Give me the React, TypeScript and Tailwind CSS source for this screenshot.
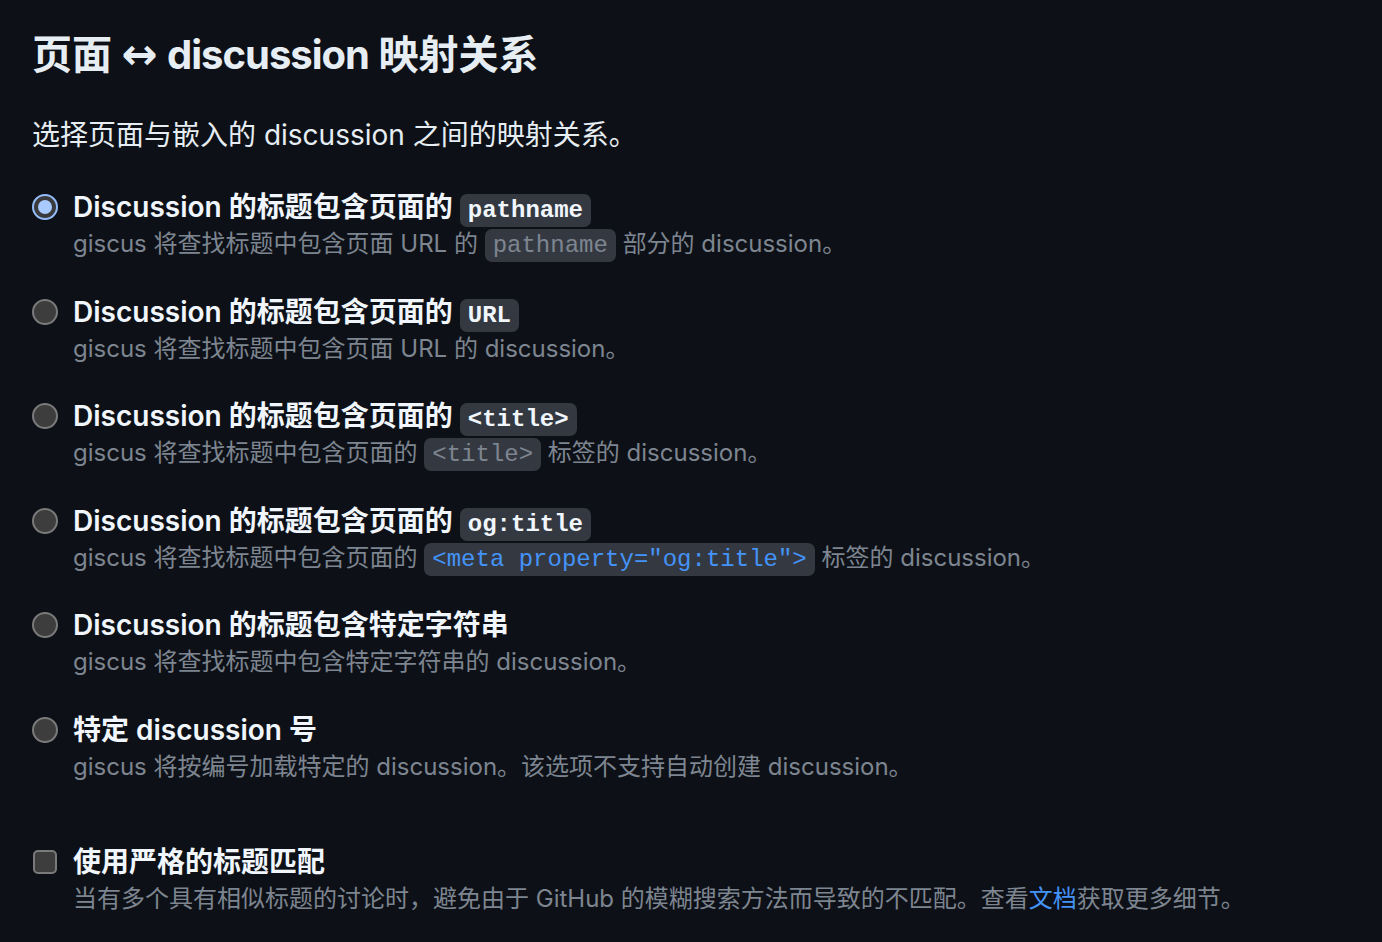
import React, { useState } from 'react';

type Mapping = {
  id: string;
  title: React.ReactNode;
  desc: React.ReactNode;
};

const font = { fontFamily: 'Inter, "Noto Sans CJK SC", sans-serif' };
const mono = { fontFamily: '"Liberation Mono", "DejaVu Sans Mono", monospace' };

const Code = ({ children, tone = 'title' }: { children: React.ReactNode; tone?: 'title' | 'muted' | 'link' }) => (
  <code
    style={mono}
    className={`rounded-[7px] bg-[#343941] px-[8px] py-[3px] align-baseline text-[24px] leading-none ${
      tone === 'title'
        ? 'font-bold text-[#f0f6fc]'
        : tone === 'link'
          ? 'text-[#4493f8]'
          : 'text-[#7d8590]'
    }`}
  >
    {children}
  </code>
);

const mappings: Mapping[] = [
  {
    id: 'pathname',
    title: <>Discussion 的标题包含页面的 <Code>pathname</Code></>,
    desc: <>giscus 将查找标题中包含页面 URL 的 <Code tone="muted">pathname</Code> 部分的 discussion。</>,
  },
  {
    id: 'url',
    title: <>Discussion 的标题包含页面的 <Code>URL</Code></>,
    desc: <>giscus 将查找标题中包含页面 URL 的 discussion。</>,
  },
  {
    id: 'title',
    title: <>Discussion 的标题包含页面的 <Code>{'<title>'}</Code></>,
    desc: <>giscus 将查找标题中包含页面的 <Code tone="muted">{'<title>'}</Code> 标签的 discussion。</>,
  },
  {
    id: 'og:title',
    title: <>Discussion 的标题包含页面的 <Code>og:title</Code></>,
    desc: <>giscus 将查找标题中包含页面的 <Code tone="link">{'<meta property="og:title">'}</Code> 标签的 discussion。</>,
  },
  {
    id: 'specific',
    title: <>Discussion 的标题包含特定字符串</>,
    desc: <>giscus 将查找标题中包含特定字符串的 discussion。</>,
  },
  {
    id: 'number',
    title: <>特定 discussion 号</>,
    desc: <>giscus 将按编号加载特定的 discussion。该选项不支持自动创建 discussion。</>,
  },
];

const Radio = ({ checked }: { checked: boolean }) =>
  checked ? (
    <span className="mt-[6px] flex h-[26px] w-[26px] shrink-0 items-center justify-center rounded-full border-2 border-[#93bcf8] bg-[#3a3a3c]">
      <span className="h-[14px] w-[14px] rounded-full bg-[#a8caff]" />
    </span>
  ) : (
    <span className="mt-[6px] h-[26px] w-[26px] shrink-0 rounded-full border-2 border-[#7a7a7a] bg-[#3d3d3d]" />
  );

export default function App() {
  const [selected, setSelected] = useState('pathname');

  return (
    <div style={font} className="min-h-screen bg-[#0d1117] pl-[32px] pt-[31px] text-[#e6edf3]">
      <h2 className="h-[48px] text-[40px] leading-[48px] font-bold text-[#e6edf3]">
        页面{' '}
        <span className="text-[43px] leading-none font-bold" style={{ fontFamily: '"DejaVu Sans", sans-serif' }}>
          ↔
        </span>{' '}
        <span className="tracking-[-1px]">discussion</span> 映射关系
      </h2>
      <p className="mt-[36px] text-[28px] leading-[40px] text-[#e6edf3]">
        选择页面与嵌入的 discussion 之间的映射关系。
      </p>

      <div className="mt-[33px] flex flex-col gap-[31.6px]">
        {mappings.map(m => (
          <label key={m.id} className="flex items-start gap-[15px]" onClick={() => setSelected(m.id)}>
            <Radio checked={selected === m.id} />
            <div>
              <div className="h-[38px] text-[28px] leading-[38px] font-semibold text-[#f0f6fc]">{m.title}</div>
              <div className="h-[35px] text-[24px] leading-[35px] text-[#7d8590]">{m.desc}</div>
            </div>
          </label>
        ))}
      </div>

      <label className="mt-[59px] flex items-start gap-[16px] pl-px">
        <span className="mt-[7px] h-[24px] w-[24px] shrink-0 rounded-[5px] border-2 border-[#7a7a7a] bg-[#3d3d3d]" />
        <div>
          <div className="h-[38px] text-[28px] leading-[38px] font-semibold text-[#f0f6fc]">使用严格的标题匹配</div>
          <div className="h-[35px] text-[24px] leading-[35px] text-[#7d8590]">
            当有多个具有相似标题的讨论时，避免由于 GitHub 的模糊搜索方法而导致的不匹配。查看
            <a className="text-[#4493f8]">文档</a>获取更多细节。
          </div>
        </div>
      </label>
    </div>
  );
}
